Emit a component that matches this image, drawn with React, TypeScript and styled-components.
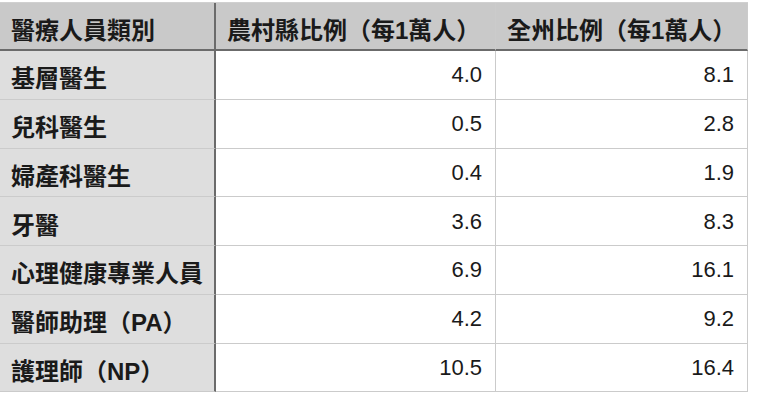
import React from "react";
import styled, { createGlobalStyle } from "styled-components";

const GlobalStyle = createGlobalStyle`
  html, body {
    margin: 0;
    padding: 0;
    background: #fff;
  }
  body {
    font-family: "Liberation Sans", "Noto Sans CJK TC", sans-serif;
    color: #1a1a1a;
  }
`;

const Table = styled.div`
  display: grid;
  grid-template-columns: 216px 280px 252px;
  grid-template-rows: 48px repeat(7, 48.75px);
  width: 748px;
  margin-top: 2px;
  border-top: 1px solid #d0d0d0;
  box-sizing: border-box;
`;

type Kind = "head" | "stub" | "data";

const Cell = styled.div<{ $kind: Kind; $first?: boolean }>`
  box-sizing: border-box;
  display: flex;
  align-items: center;
  justify-content: ${(p) => (p.$kind === "data" ? "flex-end" : "flex-start")};
  padding: ${(p) => (p.$kind === "data" ? "1px 13px 0 12px" : "4px 8px 0 11px")};
  font-size: 24px;
  font-weight: ${(p) => (p.$kind === "data" ? 400 : 700)};
  white-space: nowrap;
  background: ${(p) =>
    p.$kind === "head" ? "#c9c9c9" : p.$kind === "stub" ? "#dedede" : "#fff"};
  border-bottom: ${(p) =>
    p.$kind === "head" ? "2px solid #6b6b6b" : "1px solid #cbcbcb"};
  border-right: ${(p) =>
    p.$first ? "2px solid #6b6b6b" : "1px solid #cbcbcb"};
`;

const Num = styled.span`
  font-family: "Liberation Sans", Arial, sans-serif;
  font-size: 22px;
`;

const rows: [string, string, string][] = [
  ["基層醫生", "4.0", "8.1"],
  ["兒科醫生", "0.5", "2.8"],
  ["婦產科醫生", "0.4", "1.9"],
  ["牙醫", "3.6", "8.3"],
  ["心理健康專業人員", "6.9", "16.1"],
  ["醫師助理（PA）", "4.2", "9.2"],
  ["護理師（NP）", "10.5", "16.4"],
];

export default function App() {
  return (
    <>
      <GlobalStyle />
      <Table>
        <Cell $kind="head" $first>醫療人員類別</Cell>
        <Cell $kind="head">農村縣比例（每1萬人）</Cell>
        <Cell $kind="head">全州比例（每1萬人）</Cell>
        {rows.map(([name, rural, state]) => (
          <React.Fragment key={name}>
            <Cell $kind="stub" $first>{name}</Cell>
            <Cell $kind="data">
              <Num>{rural}</Num>
            </Cell>
            <Cell $kind="data">
              <Num>{state}</Num>
            </Cell>
          </React.Fragment>
        ))}
      </Table>
    </>
  );
}
